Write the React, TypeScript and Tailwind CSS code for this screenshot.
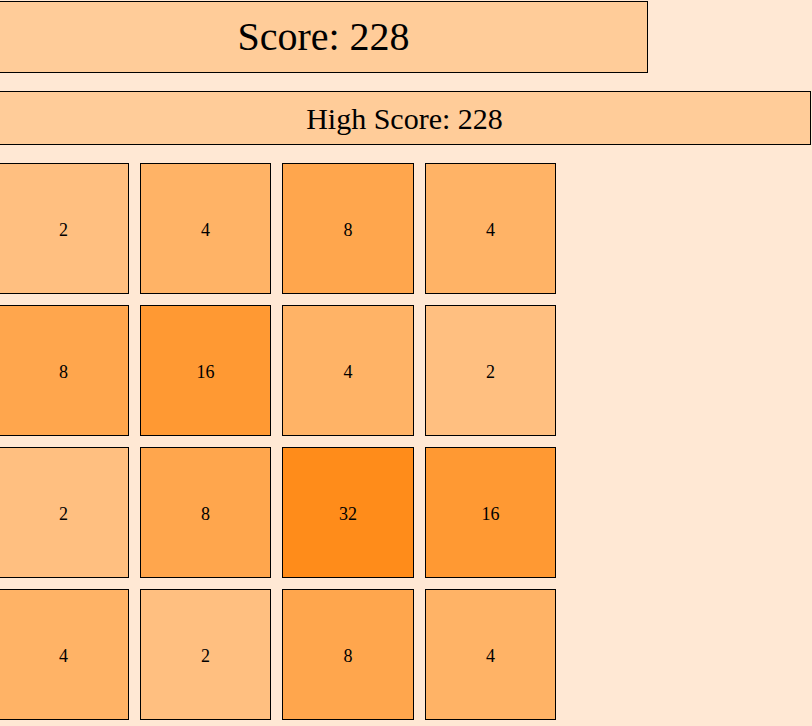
const board = [
  [2, 4, 8, 4],
  [8, 16, 4, 2],
  [2, 8, 32, 16],
  [4, 2, 8, 4],
];

function tileColor(v: number) {
  switch (v) {
    case 2:
      return "bg-[#ffbf80]";
    case 4:
      return "bg-[#ffb366]";
    case 8:
      return "bg-[#ffa64d]";
    case 16:
      return "bg-[#ff9933]";
    case 32:
      return "bg-[#ff8c1a]";
    default:
      return "bg-[#ff8000]";
  }
}

export default function App() {
  return (
    <div className="w-[812px] h-[726px] overflow-hidden bg-[#ffe8d4] font-['Liberation_Serif',serif] text-black">
      <div className="pt-px">
        <div className="ml-[-1px] w-[649px] h-[72px] border border-black bg-[#ffcc99] flex items-center justify-center text-[40px]">
          Score: 228
        </div>
        <div className="mt-[18px] ml-[-2px] w-[813px] h-[54px] border border-black bg-[#ffcc99] flex items-center justify-center text-[30px] pt-px">
          High Score: 228
        </div>
        <div className="mt-[18px] ml-[-2px] grid grid-cols-[131px_131px_132px_131px] gap-[11px]">
          {board.flat().map((v, i) => (
            <div
              key={i}
              className={`h-[131px] border border-black flex items-center justify-center text-[18px] pt-[4px] ${tileColor(v)}`}
            >
              {v}
            </div>
          ))}
        </div>
      </div>
    </div>
  );
}
